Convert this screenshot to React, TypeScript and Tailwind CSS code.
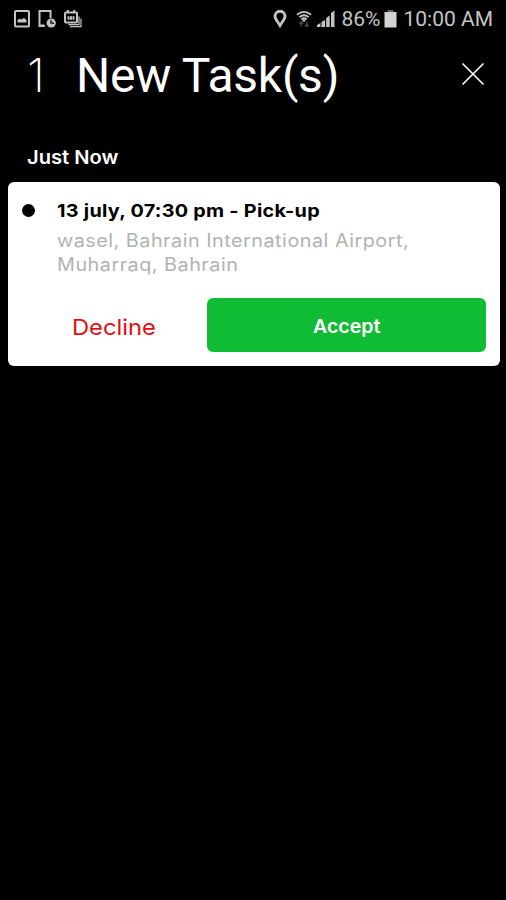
const StatusBar = () => {
  return (
    <div className="flex h-9 items-center justify-between pl-[14px] pr-[13px] pt-px font-[Roboto,sans-serif] text-[21px] leading-none text-[#c4c4c4]">
      <div className="flex items-center gap-[8px]">
        <svg width="16" height="18" viewBox="0 0 16 18" fill="none">
          <rect x="1" y="1" width="14" height="15.5" rx="1" stroke="currentColor" strokeWidth="2" />
          <path d="M3.5 12.5V10l2-1.2 1.500.7L10 8l2.500 2v2.500z" fill="currentColor" />
        </svg>
        <svg width="18" height="18" viewBox="0 0 18 18" fill="none">
          <path d="M12.500 8V1H1.500v15h5" stroke="currentColor" strokeWidth="2" />
          <path d="M1 14.500h5.500v2.500H1z" fill="currentColor" />
          <circle cx="13.200" cy="13" r="4.600" fill="currentColor" />
          <path d="M13 10v3.200h3" stroke="#000" strokeWidth="1.200" />
        </svg>
        <svg width="18" height="18" viewBox="0 0 18 18" fill="none">
          <rect x="1" y="2.500" width="12" height="10" rx="1" stroke="currentColor" strokeWidth="2" />
          <path d="M3.800 0v3M10.200 0v3" stroke="currentColor" strokeWidth="2" />
          <path d="M3.500 8h7" stroke="currentColor" strokeWidth="3.500" strokeDasharray="2 .5" />
          <path d="M15 6.500v8.200H4.500M17 8.500v8.200H6" stroke="currentColor" strokeWidth="1.200" />
        </svg>
      </div>
      <div className="flex items-center">
        <svg width="14" height="18" viewBox="0 0 14 18" fill="none">
          <path d="M7 15.500C5 12 2 9.200 2 6.300a5 5 0 0 1 10 0C12 9.200 9 12 7 15.500z" stroke="currentColor" strokeWidth="2.800" />
        </svg>
        <svg className="ml-[9px]" width="16" height="18" viewBox="0 0 17 18" fill="none">
          <path d="M1 4.500Q8.500-1.500 16 4.500M3.500 7Q8.500 3 13.500 7M5.800 9.300Q8.500 7 11.200 9.300" stroke="currentColor" strokeWidth="1.900" />
          <path d="M8.500 12.500 6 9.500h5z" fill="currentColor" />
          <path d="M5.500 12v5M3.500 14l2-2 2 2M11.500 12v5M9.500 15l2 2 2-2" stroke="#484848" strokeWidth="1.500" />
        </svg>
        <svg className="ml-[5px]" width="18" height="18" viewBox="0 0 18 18" fill="currentColor">
          <path d="M0 17v-2l3.500-2v4zM4.500 17v-5l3.500-2v7zM9.200 17V8l3.500-2.500V17zM14 17V3l3.500-2.500V17z" />
        </svg>
        <span className="ml-[6px] pt-px">86%</span>
        <svg className="ml-[4px]" width="13" height="18" viewBox="0 0 13 18">
          <path d="M3.500 0h6v2h-6z" fill="#666" />
          <path d="M.5 2h12v15.500H.5z" fill="#d4d4d4" />
        </svg>
        <span className="ml-[6px] pt-px">10:00 AM</span>
      </div>
    </div>
  )
}

const Header = () => {
  return (
    <div className="flex h-[78px] items-center pl-[27px] pr-[21px] text-white">
      <span className="w-[49px] pb-[2px] font-[Inter,sans-serif] text-[47px] font-extralight leading-none">1</span>
      <h1 className="flex-1 whitespace-nowrap pt-px font-[Roboto,sans-serif] text-[48px] leading-none tracking-[-0.25px]">New Task(s)</h1>
      <button aria-label="Close" className="pb-[3px]">
        <svg width="24" height="24" viewBox="0 0 24 24" stroke="currentColor" strokeWidth="1.600">
          <path d="M1.500 1.500l21 21M22.500 1.500l-21 21" />
        </svg>
      </button>
    </div>
  )
}

const TaskCard = () => {
  return (
    <div className="ml-[7.5px] mr-[6.5px] h-[184px] rounded-[6px] bg-white pl-[14px] pr-[14px]">
      <div className="flex h-[116.500px] pt-[17px]">
        <span className="mt-[5px] size-[13px] rounded-full bg-black" />
        <div className="ml-[22px] origin-left scale-x-110 whitespace-nowrap">
          <h2 className="text-[18px] font-bold leading-6 tracking-[0.24px] text-black">13 july, 07:30 pm - Pick-up</h2>
          <p className="mt-[6px] text-[18px] leading-6 tracking-[0.45px] text-[#b2b2b2]">
            wasel, Bahrain International Airport,
            <br />
            Muharraq, Bahrain
          </p>
        </div>
      </div>
      <div className="flex h-[54px]">
        <button className="w-[185.500px] pt-[4px] text-[22px] text-[#e01010]">
          <span className="inline-block scale-x-[1.080]">Decline</span>
        </button>
        <button className="flex-1 rounded-[6px] bg-[#10bc34] pt-[5px] text-[19px] font-semibold text-white">
          <span className="inline-block scale-x-[1.030]">Accept</span>
        </button>
      </div>
    </div>
  )
}

export default function App() {
  return (
    <div className="h-[900px] w-[506px] overflow-hidden bg-black font-[Inter,sans-serif]">
      <StatusBar />
      <Header />
      <p className="flex h-[67.500px] items-center pl-[27px] pt-[20px] text-[19px] font-semibold text-white">
        <span className="origin-left scale-x-[1.060]">Just Now</span>
      </p>
      <TaskCard />
    </div>
  )
}
